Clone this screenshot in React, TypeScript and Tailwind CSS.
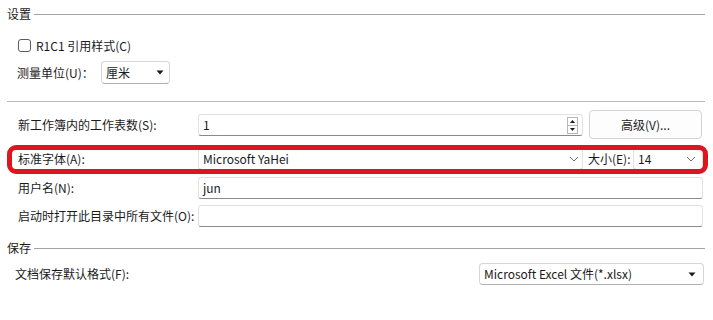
import React from "react";

const Tri = () => (
  <svg width="8" height="5" viewBox="0 0 8 5" className="shrink-0">
    <path d="M0.5 0.5 L7.5 0.5 L4 4.5 Z" fill="#1a1a1a" />
  </svg>
);

const Chevron = () => (
  <svg width="10" height="6" viewBox="0 0 10 6" className="shrink-0">
    <path d="M1 1 L5 5 L9 1" fill="none" stroke="#6e6e6e" strokeWidth="1" />
  </svg>
);

const Spinner = () => (
  <div className="absolute right-[4px] top-[2px] w-[11px] h-[17px] flex flex-col border border-[#b8b8b8] bg-white">
    <div className="flex-1 flex items-center justify-center border-b border-[#b8b8b8]">
      <svg width="5" height="3" viewBox="0 0 5 3">
        <path d="M0 3 L2.5 0 L5 3 Z" fill="#1a1a1a" />
      </svg>
    </div>
    <div className="flex-1 flex items-center justify-center">
      <svg width="5" height="3" viewBox="0 0 5 3">
        <path d="M0 0 L5 0 L2.5 3 Z" fill="#1a1a1a" />
      </svg>
    </div>
  </div>
);

export default function App() {
  const input =
    "relative h-[22px] bg-white border border-[#e2e2e2] border-b-[#8a8a8a] rounded-[3px] flex items-center pl-[4px]";
  return (
    <div className="relative w-[713px] h-[320px] bg-white text-[12px] leading-none text-[#1a1a1a] overflow-hidden font-['Noto_Sans_CJK_SC','Noto_Sans',sans-serif] flex flex-col">
      {/* 设置 header */}
      <div className="flex items-center h-[28px] pl-[7px] pr-[8px]">
        <span>设置</span>
        <div className="ml-[3px] flex-1 h-px bg-[#a4a4a4]" />
      </div>

      {/* checkbox row */}
      <div className="mt-[7px] h-[21px] flex items-center pl-[18px]">
        <div className="w-[13px] h-[13px] border border-[#5c5c5c] rounded-[3px] bg-white" />
        <span className="ml-[5px]">R1C1 引用样式(C)</span>
      </div>

      {/* measure row */}
      <div className="mt-[5px] h-[23px] flex items-center pl-[17px]">
        <span className="w-[84px] shrink-0">测量单位(U)：</span>
        <div className="w-[69px] h-[23px] bg-white border border-[#d6d6d6] border-b-[#b0b0b0] rounded-[4px] flex items-center justify-between pl-[4px] pr-[5px]">
          <span>厘米</span>
          <Tri />
        </div>
      </div>

      {/* divider */}
      <div className="mt-[17px] h-px ml-[7px] mr-[8px] bg-[#b8b8b8]" />

      {/* worksheets row */}
      <div className="mt-[8px] h-[29px] flex items-center pl-[18px]">
        <span className="w-[180px] shrink-0">新工作簿内的工作表数(S):</span>
        <div className={`${input} w-[385px] h-[21px]`}>
          <span>1</span>
          <Spinner />
        </div>
        <div className="ml-[6px] w-[113px] h-[29px] bg-[#fdfdfd] border border-[#d4d4d4] rounded-[4px] flex items-center justify-center">
          高级(V)...
        </div>
      </div>

      {/* font row */}
      <div className="mt-[9px] h-[22px] flex items-center pl-[18px]">
        <span className="w-[180px] shrink-0">标准字体(A):</span>
        <div className={`${input} w-[385px] justify-between pr-[3px]`}>
          <span>Microsoft YaHei</span>
          <Chevron />
        </div>
        <span className="ml-[5px] w-[45px] shrink-0">大小(E):</span>
        <div className={`${input} w-[70px] justify-between pr-[6px]`}>
          <span>14</span>
          <Chevron />
        </div>
      </div>

      {/* user row */}
      <div className="mt-[7px] h-[22px] flex items-center pl-[18px]">
        <span className="w-[180px] shrink-0">用户名(N):</span>
        <div className={`${input} w-[505px]`}>
          <span>jun</span>
        </div>
      </div>

      {/* startup row */}
      <div className="mt-[6px] h-[22px] flex items-center pl-[18px]">
        <span className="w-[180px] shrink-0">启动时打开此目录中所有文件(O):</span>
        <div className={`${input} w-[505px]`} />
      </div>

      {/* 保存 header */}
      <div className="mt-[11px] h-[20px] flex items-center pl-[7px] pr-[8px]">
        <span>保存</span>
        <div className="ml-[3px] flex-1 h-px bg-[#a4a4a4]" />
      </div>

      {/* format row */}
      <div className="mt-[5px] h-[22px] flex items-center pl-[15px] pr-[9px]">
        <span className="flex-1">文档保存默认格式(F):</span>
        <div className="w-[225px] h-[22px] bg-white border border-[#d6d6d6] border-b-[#b0b0b0] rounded-[4px] flex items-center justify-between pl-[4px] pr-[7px]">
          <span>Microsoft Excel 文件(*.xlsx)</span>
          <Tri />
        </div>
      </div>

      {/* red annotation */}
      <div className="absolute left-[7px] top-[145px] w-[701px] h-[29px] border-[5px] border-[#dc161d] rounded-[9px] pointer-events-none" />
    </div>
  );
}
